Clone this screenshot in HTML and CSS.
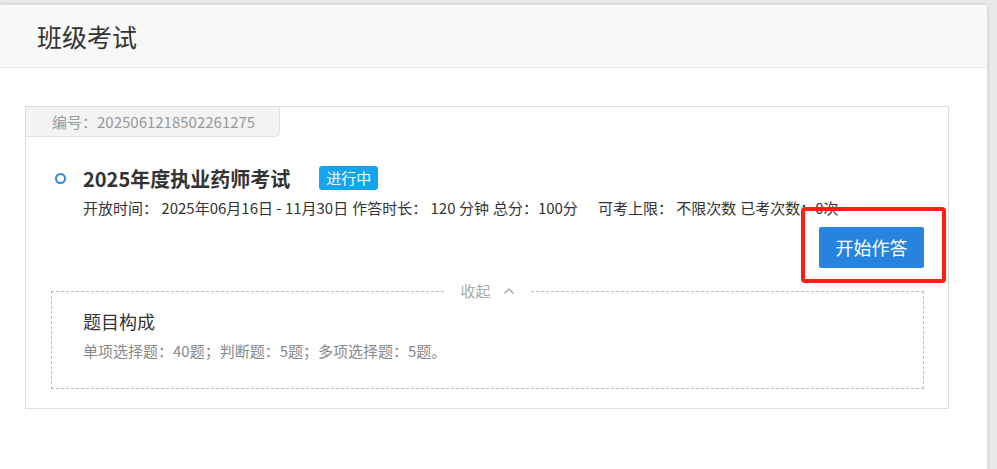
FILE: index.html
```html
<!DOCTYPE html>
<html lang="zh-CN">
<head>
    <meta charset="UTF-8">
    <meta name="viewport" content="width=device-width, initial-scale=1.0">
    <title>班级考试</title>
    <link rel="stylesheet" href="styles.css">
</head>
<body>
    <div class="panel">
        <div class="panel_head">班级考试</div>

        <div class="panel_body">
            <div class="exam_card">
                <div class="exam_no">编号：2025061218502261275</div>

                <div class="exam_title">
                    <span class="dot"></span>
                    <span class="name">2025年度执业药师考试</span>
                    <span class="badge">进行中</span>
                </div>

                <div class="exam_info">
                    <span>开放时间：&nbsp;2025年06月16日 - 11月30日</span>
                    <span>作答时长：&nbsp;120 分钟</span>
                    <span>总分：100分</span>
                    <span class="gap">可考上限：&nbsp;不限次数</span>
                    <span>已考次数：0次</span>
                </div>

                <div class="exam_action">
                    <a class="btn_start" href="#">开始作答</a>
                </div>

                <div class="detail_box">
                    <div class="fold">收起
                        <svg width="12" height="8" viewBox="0 0 12 8"><path d="M1.5 6.5 L6 2 L10.5 6.5" fill="none" stroke="#aaa" stroke-width="1.4"/></svg>
                    </div>
                    <div class="detail_title">题目构成</div>
                    <div class="detail_text">单项选择题：40题；判断题：5题；多项选择题：5题。</div>
                </div>

                <!-- 标注框 -->
                <div class="mark"></div>
            </div>
        </div>
    </div>
</body>
</html>
```

FILE: styles.css
```css
body{
    margin: 0;
    background-color: #e9e9e9;
    font-family: "Noto Sans CJK SC", "Noto Sans", sans-serif;
    color: #333;
    height: 469px;
    overflow: hidden;
}
.panel{
    width: 987px;
    margin-top: 5px;
    height: 470px;
    background-color: #fff;
    box-shadow: 0 0 4px rgba(0, 0, 0, .18);
}
.panel_head{
    height: 62px;
    line-height: 62px;
    padding-left: 37px;
    font-size: 25px;
    color: #333;
    background-color: #f8f8f8;
    border-bottom: 1px solid #e6e6e6;
}
.panel_body{
    padding: 38px 0 0 25px;
}
.exam_card{
    position: relative;
    width: 922px;
    height: 301px;
    border: 1px solid #ddd;
}
.exam_no{
    width: 227px;
    height: 29px;
    line-height: 29px;
    padding-left: 26px;
    font-size: 15px;
    color: #999;
    background-color: #f3f3f3;
    border-right: 1px solid #e2e2e2;
    border-bottom: 1px solid #e2e2e2;
    border-bottom-right-radius: 5px;
}
.exam_title{
    display: flex;
    align-items: center;
    height: 26px;
    margin-top: 28px;
    padding-left: 29px;
}
.dot{
    width: 7px;
    height: 7px;
    border: 2px solid #2d87e0;
    border-radius: 50%;
}
.name{
    margin-left: 17px;
    font-size: 20px;
    font-weight: bold;
    color: #333;
}
.badge{
    margin-left: 29px;
    padding: 0 7px;
    height: 24px;
    line-height: 24px;
    font-size: 15px;
    color: #fff;
    background-color: #14a5ee;
    border-radius: 3px;
}
.exam_info{
    display: flex;
    gap: 4px;
    margin-top: 7px;
    padding-left: 57px;
    font-size: 15px;
    line-height: 20px;
    color: #333;
}
.exam_info .gap{
    margin-left: 16px;
}
.exam_action{
    display: flex;
    justify-content: flex-end;
    margin-top: 9px;
    padding-right: 24px;
}
.btn_start{
    width: 105px;
    height: 41px;
    line-height: 41px;
    text-align: center;
    font-size: 18px;
    color: #fff;
    text-decoration: none;
    background-color: #2784de;
    border-radius: 2px;
}
.detail_box{
    position: relative;
    margin: 23px 24px 0 25px;
    height: 96px;
    padding-left: 31px;
    border: 1px dashed #bbb;
}
.fold{
    position: absolute;
    top: -12px;
    left: 50%;
    transform: translateX(-50%);
    padding: 0 15px;
    line-height: 22px;
    font-size: 15px;
    color: #aaa;
    background-color: #fff;
    display: flex;
    align-items: center;
    gap: 12px;
}
.detail_title{
    margin-top: 17px;
    font-size: 18px;
    line-height: 24px;
    color: #333;
}
.detail_text{
    margin-top: 8px;
    font-size: 15px;
    line-height: 20px;
    color: #888;
}
.mark{
    position: absolute;
    left: 775px;
    top: 100px;
    width: 137px;
    height: 68px;
    border: 4px solid #ff1d14;
    border-radius: 4px;
}
```
